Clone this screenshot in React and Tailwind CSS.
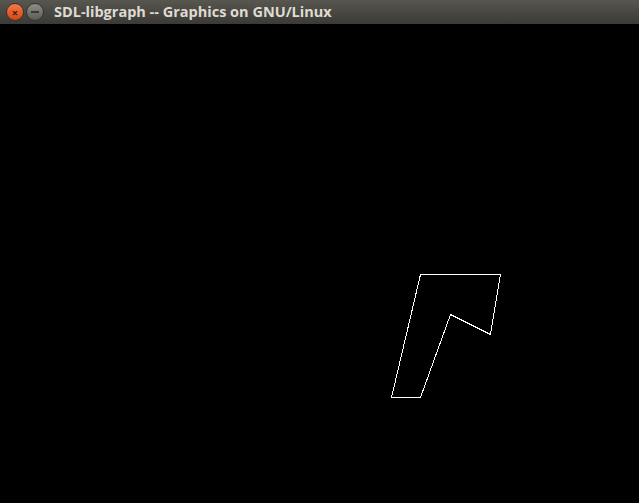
export default function App() {
  return (
    <div className="w-[639px] h-[503px] bg-black flex flex-col overflow-hidden">
      {/* Title bar */}
      <div className="h-6 flex items-center bg-gradient-to-b from-[#57564f] to-[#3b3a36] pl-[6px]">
        <div className="w-[18px] h-[18px] shrink-0 rounded-full bg-gradient-to-b from-[#f27a48] to-[#d9440f] flex items-center justify-center border border-[#34332f]">
          <span className="text-[11px] leading-none text-[#4a1c08] font-bold">×</span>
        </div>
        <div className="ml-[2px] w-[18px] h-[18px] shrink-0 rounded-full bg-gradient-to-b from-[#8f8e88] to-[#5c5b56] flex items-center justify-center border border-[#34332f]">
          <div className="w-[8px] h-[2px] bg-[#3a3935]" />
        </div>
        <span className="ml-[10px] text-[14.5px] font-bold text-[#dfdbd2] leading-none whitespace-nowrap" style={{ fontFamily: '"Open Sans", "DejaVu Sans", sans-serif' }}>
          SDL-libgraph -- Graphics on GNU/Linux
        </span>
      </div>
      {/* Canvas */}
      <div className="flex-1">
        <svg width="639" height="479" viewBox="0 24 639 479" className="block">
          <polygon
            points="420.5,274.5 500.5,274.5 490.5,334.5 450.5,314.5 420.5,397.5 391.5,397.5"
            fill="none"
            stroke="#ffffff"
            strokeWidth="1"
            shapeRendering="crispEdges"
          />
        </svg>
      </div>
    </div>
  );
}
